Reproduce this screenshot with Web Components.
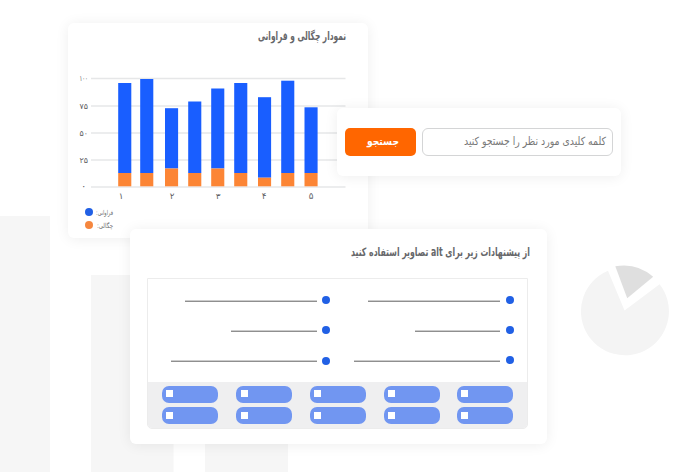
<!DOCTYPE html>
<html lang="fa">
<head>
<meta charset="utf-8">
<title>نمودار چگالی و فراوانی</title>
<style>
html,body{margin:0;height:100%;overflow:hidden;background:#fff}
body{font-family:"DejaVu Sans","Noto Sans",sans-serif}
</style>
</head>
<body>
<dashboard-scene></dashboard-scene>
<script>
class Base extends HTMLElement{
  connectedCallback(){
    if(this.shadowRoot)return;
    this.attachShadow({mode:'open'}).innerHTML=this.render();
  }
  num(n){return parseFloat(this.getAttribute(n))}
}

/* One line of right-to-left text, fitted to a given width. */
customElements.define('fit-text',class extends Base{
  render(){
    const w=this.num('width'),s=this.num('size'),h=Math.ceil(s*1.8);
    return `<style>:host{display:block;flex:none;width:${w}px;height:${h}px}svg{display:block;overflow:visible}
    text{font-size:${s}px;font-weight:${this.getAttribute('weight')||400};fill:currentColor}</style>
    <svg width="${w}" height="${h}"><text direction="rtl" x="${w}" y="${s*1.2}" textLength="${w}" lengthAdjust="spacingAndGlyphs">${this.getAttribute('text')}</text></svg>`;
  }
});

customElements.define('soft-card',class extends Base{
  render(){return `<style>:host{display:block;box-sizing:border-box;background:#fff;border-radius:6px;box-shadow:0 1px 14px rgba(0,0,0,.07)}</style><slot></slot>`}
});

customElements.define('page-backdrop',class extends Base{
  render(){return `<style>:host{display:block}svg{display:block}</style>
  <svg width="674" height="472"><g fill="#f6f6f6"><path d="M0 216H50V472H0zM91 275H173.5V472H91zM205 340H288V472H205z"/></g>
  <path d="M624.5 310.5L608 270.7A44 44 0 1 0 659.6 284.2Z" fill="#f4f4f4"/>
  <path d="M627.2 298.3L615.3 266.3Q637 262.5 653.2 276.8Z" fill="#dfdfdf"/></svg>`}
});

customElements.define('bar-chart',class extends Base{
  render(){
    const bars=[[118.2,83,173],[140.2,79,173],[165,108.2,168.5],[188.2,101.5,173],[211.2,88.5,168.5],[234.2,83,173],[258,97.2,177.7],[281.2,80.7,173],[304.5,107.3,173]];
    const grid=[78.5,106,133,160,187].map(y=>`<path d="M91 ${y}H345.5"/>`).join('');
    const ys=[['۱۰۰',80.7],['۷۵',108.7],['۵۰',135.7],['۲۵',162.7],['۰',189.2]].map(([t,y])=>`<text x="83.7" y="${y}" ${t.length>1?'textLength="8.5" lengthAdjust="spacingAndGlyphs"':'font-size="10"'}>${t}</text>`).join('');
    const xs=[['۱',121],['۲',172],['۳',218],['۴',264],['۵',311]].map(([t,x])=>`<text x="${x}" y="198.5">${t}</text>`).join('');
    return `<style>:host{display:block}svg{display:block}text{text-anchor:middle;fill:#606164}</style>
    <svg width="300" height="136" viewBox="68 68 300 136"><g stroke="#e6e7e8" stroke-width="1.4">${grid}</g>
    ${bars.map(([x,t,o])=>`<rect x="${x}" y="${t}" width="13.1" height="${o-t}" fill="#195eff"/><rect x="${x}" y="${o}" width="13.1" height="${186.3-o}" fill="#fc8535"/>`).join('')}
    <g font-size="7.8">${ys}</g><g font-size="8.8">${xs}</g></svg>`;
  }
});

customElements.define('legend-row',class extends Base{
  render(){return `<style>:host{display:flex;width:28px;height:13.6px;align-items:center;justify-content:space-between;margin-left:17.3px;color:#6d6e70;direction:ltr}
  i{width:8px;height:8px;border-radius:50%;background:${this.getAttribute('color')}}fit-text{margin-top:3px}</style>
  <i></i><fit-text width="${this.getAttribute('tw')}" size="6.8" text="${this.getAttribute('label')}"></fit-text>`}
});

customElements.define('search-bar',class extends Base{
  render(){return `<style>:host{display:grid;grid-template-columns:71px 191px;gap:6px;padding:20px 8px}
  div{box-sizing:border-box;height:28px;display:flex;align-items:center}
  .b{background:#f60;border-radius:5px;color:#fff;justify-content:center}
  .b fit-text{margin-left:4px}
  .i{border:1px solid #d4d5d6;border-radius:6px;justify-content:flex-end;padding-right:6px;color:#777}</style>
  <div class="b"><fit-text width="32" size="11" weight="700" text="جستجو"></fit-text></div>
  <div class="i"><fit-text width="142" size="11.2" text="کلمه کلیدی مورد نظر را جستجو کنید"></fit-text></div>`}
});

customElements.define('suggestion-line',class extends Base{
  render(){return `<style>:host{display:flex;height:8px;align-items:center;justify-content:flex-end;gap:${this.getAttribute('gap')}px}
  b{width:${this.getAttribute('width')}px;height:1px;background:#8f8f8f;border-top:1px solid #ccc;box-sizing:content-box;margin-top:2px}
  i{width:8px;height:8px;border-radius:50%;background:#2160e5;margin-top:${2*(this.num('drop')||0)}px}</style><b></b><i></i>`}
});

customElements.define('option-pill',class extends Base{
  render(){return `<style>:host{display:block;box-sizing:border-box;width:56px;height:17px;border-radius:7px;background:#7196f1;padding:${this.getAttribute('top')}px 0 0 ${this.getAttribute('left')}px}
  i{display:block;width:7px;height:7px;background:#fff}</style><i></i>`}
});

customElements.define('suggestion-panel',class extends Base{
  render(){
    const col=(ws,last,gap)=>`<div class="col">${ws.map((w,i)=>`<suggestion-line width="${w}" gap="${gap}" drop="${i==2?last:0}"></suggestion-line>`).join('')}</div>`;
    const lefts=[4,5,4,4,4];
    const row=t=>lefts.map(l=>`<option-pill top="${t}" left="${l}"></option-pill>`).join('');
    return `<style>:host{display:block;box-sizing:border-box;width:381px;height:151px;border:1px solid #ececec;border-radius:0 0 5px 5px;overflow:hidden}
    .lines{display:grid;grid-template-columns:181.6px 184px;height:103px;box-sizing:border-box;padding-top:17px}
    .col{display:flex;flex-direction:column;gap:22px}
    .foot{height:47px;box-sizing:border-box;background:#efeff0;display:grid;grid-template-columns:56px 56px 56px 56px 56px;column-gap:18px;row-gap:4px;padding:4px 0 0 14px;align-content:start}
    .foot option-pill:nth-child(5n){margin-left:-1px}</style>
    <div class="lines">${col([131.5,85.5,145.5],1,5)}${col([131.5,85,145.5],0,5.8)}</div>
    <div class="foot">${row(4)}${row(5)}</div>`;
  }
});

customElements.define('dashboard-scene',class extends Base{
  render(){return `<style>:host{display:block;position:relative;width:674px;height:472px;overflow:hidden;color:#66676a}
  soft-card{position:absolute}
  .chart{left:68px;top:23px;width:300px;height:215px}
  .search{left:337px;top:108px;width:284px;height:68px}
  .sugg{left:130px;top:229px;width:417px;height:215px}
  .t1{display:flex;justify-content:flex-end;height:45px;box-sizing:border-box;padding:3px 22px 0 0}
  .t3{display:flex;justify-content:flex-end;height:49px;box-sizing:border-box;padding:12.5px 17px 0 0}
  suggestion-panel{margin-left:17px}
  .legend{padding-top:1px}</style>
  <page-backdrop></page-backdrop>
  <soft-card class="chart"><div class="t1"><fit-text width="88" size="11.6" weight="700" text="نمودار چگالی و فراوانی"></fit-text></div>
  <bar-chart></bar-chart>
  <div class="legend"><legend-row color="#2160e5" tw="17" label="فراوانی:"></legend-row><legend-row color="#f5873f" tw="16" label="چگالی:"></legend-row></div></soft-card>
  <soft-card class="search"><search-bar></search-bar></soft-card>
  <soft-card class="sugg"><div class="t3"><fit-text width="179" size="11.6" weight="700" text="از پیشنهادات زیر برای alt تصاویر استفاده کنید"></fit-text></div>
  <suggestion-panel></suggestion-panel></soft-card>`}
});
</script>
</body>
</html>
